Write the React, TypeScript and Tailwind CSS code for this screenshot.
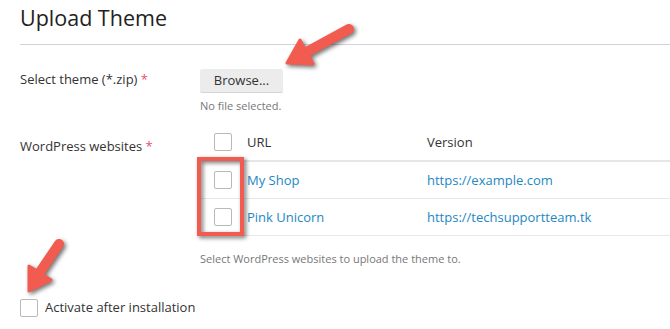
import React from 'react';

const Checkbox = () => (
  <span className="block w-[18px] h-[18px] border border-[#b9b9b9] rounded-[2px] bg-white" />
);

const sites = [
  { name: 'My Shop', url: 'https://example.com' },
  { name: 'Pink Unicorn', url: 'https://techsupportteam.tk' },
];

const Annotations = () => (
  <svg
    className="absolute inset-0 pointer-events-none drop-shadow-[2px_2px_2px_rgba(0,0,0,0.55)]"
    width={670}
    height={329}
    viewBox="0 0 670 329"
  >
    {/* arrow to the Browse button */}
    <line x1={305} y1={53} x2={349} y2={29} stroke="#f25b4f" strokeWidth={10} strokeLinecap="round" />
    <polygon points="287,63 313,64 300,40" fill="#f25b4f" stroke="#f25b4f" strokeWidth={3} strokeLinejoin="round" />
    {/* arrow to the activate checkbox */}
    <line x1={40} y1={272} x2={59} y2={244} stroke="#f25b4f" strokeWidth={10} strokeLinecap="round" />
    <polygon points="29,291 51,280 29,266" fill="#f25b4f" stroke="#f25b4f" strokeWidth={3} strokeLinejoin="round" />
    {/* box around the row checkboxes */}
    <rect x={199} y={159} width={43} height={75} fill="none" stroke="#f25b4f" strokeWidth={4} />
  </svg>
);

export default function App() {
  return (
    <div className="relative w-[670px] h-[329px] overflow-hidden bg-white font-['Open_Sans',sans-serif] text-[#333]">
      <div className="pl-5">
        <h1 className="h-[45px] pt-[2px] text-[21.5px] leading-[32px] text-[#222] border-b border-[#d3d2dc]">
          Upload Theme
        </h1>

        <div className="flex mt-[22px]">
          <div className="w-[180px] text-[13px] leading-[24px]">
            Select theme (*.zip) <span className="text-[#e0536a]">*</span>
          </div>
          <div>
            <button className="w-[83px] h-[24px] bg-[#ececec] border-b border-[#d4d4d4] rounded-[2px] text-[13px] text-[#333]">
              Browse...
            </button>
            <div className="mt-[5px] text-[11px] leading-[16px] text-[#777]">No file selected.</div>
          </div>
        </div>

        <div className="flex mt-[10px]">
          <div className="w-[180px] pt-[12px] text-[13px] leading-[20px]">
            WordPress websites <span className="text-[#e0536a]">*</span>
          </div>
          <div className="flex-1">
            <div className="flex items-center h-[38px] border-b-2 border-[#e6e6e6] text-[13px]">
              <div className="w-[47px] pl-[14px]">
                <Checkbox />
              </div>
              <div className="w-[180px]">URL</div>
              <div>Version</div>
            </div>
            {sites.map((site) => (
              <div key={site.name} className="flex items-center h-[37px] border-b border-[#e8e8e8] text-[13px] text-[#1d87c4]">
                <div className="w-[47px] pl-[14px]">
                  <Checkbox />
                </div>
                <div className="w-[180px]">{site.name}</div>
                <div>{site.url}</div>
              </div>
            ))}
            <div className="mt-[15px] text-[11px] leading-[16px] text-[#777]">
              Select WordPress websites to upload the theme to.
            </div>
          </div>
        </div>

        <div className="flex items-center gap-[7px] mt-[31px]">
          <Checkbox />
          <span className="text-[13px]">Activate after installation</span>
        </div>
      </div>
      <Annotations />
    </div>
  );
}
